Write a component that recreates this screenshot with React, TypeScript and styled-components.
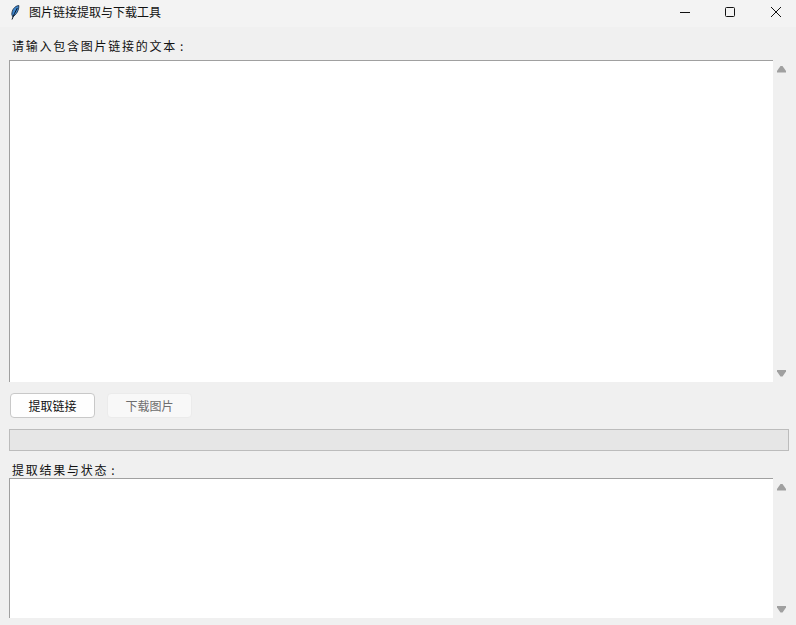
import React from "react";
import styled, { createGlobalStyle } from "styled-components";

const Global = createGlobalStyle`
  html, body { margin: 0; padding: 0; background: #f0f0f0; overflow: hidden; }
  #root { width: 796px; height: 625px; }
  * { box-sizing: border-box; }
`;
const cjk = `"Noto Sans CJK SC", "Liberation Sans", sans-serif`;

const Window = styled.div`
  width: 796px; height: 625px; display: flex; flex-direction: column;
  background: #f0f0f0; font-family: ${cjk}; color: #111; overflow: hidden;
`;
const TitleBar = styled.div`
  height: 27px; flex: none; display: flex; align-items: center; background: #f3f3f3; padding-left: 8px;
`;
const Title = styled.span`
  font-size: 12px; margin-left: 7px; color: #111; line-height: 24px; margin-top: -4px;
`;
const WinButtons = styled.div`
  margin-left: auto; display: flex; align-items: center; margin-top: -3px;
`;
const WinButton = styled.div<{ $w: number; $inset?: number }>`
  width: ${(p) => p.$w}px; height: 24px; display: flex; align-items: center; justify-content: center;
  padding-left: ${(p) => p.$inset ?? 0}px;
`;
const Body = styled.div`
  flex: 1; display: flex; flex-direction: column; padding: 0 7px 7px 9px; min-height: 0;
`;
const Label = styled.div`
  font-size: 12px; line-height: 16px; letter-spacing: 1.75px; padding-left: 3px; height: 33px; padding-top: 11px;
  white-space: pre;
  &[data-second] { height: 27px; padding-top: 11px; }
`;
const Colon = styled.span`
  margin-left: 3px;
`;
const TextRow = styled.div<{ $h: number }>`
  height: ${(p) => p.$h}px; flex: none; display: flex;
`;
const TextBox = styled.div`
  width: 764px; background: #fff; border-top: 1px solid #a0a0a0; border-left: 1px solid #a0a0a0;
`;
const ScrollBar = styled.div`
  width: 16px; display: flex; flex-direction: column; justify-content: space-between; align-items: center;
  padding: 6px 0 5px; background: #f0f0f0;
`;
const Buttons = styled.div`
  display: flex; gap: 12px; padding: 11px 0 0 1px; height: 47px; flex: none;
`;
const Btn = styled.div<{ $off?: boolean }>`
  width: 85px; height: 25px; display: flex; align-items: center; justify-content: center; font-size: 12px;
  border-radius: 4px; background: ${(p) => (p.$off ? "#f8f8f8" : "#fefefe")};
  border: 1px solid ${(p) => (p.$off ? "#ebebeb" : "#c8c8c8")};
  color: ${(p) => (p.$off ? "#6e6e6e" : "#111")};
`;
const Progress = styled.div`
  width: 780px; height: 22px; flex: none; background: #e6e6e6; border: 1px solid #bcbcbc;
`;

const Arrow = ({ down }: { down?: boolean }) => (
  <svg width="9" height="7" viewBox="0 0 9 7">
    <path d={down ? "M0 0h9v1.500L5.500 6.500h-2L0 1.500z" : "M0 6.500h9V5L5.500 0h-2L0 5z"} fill="#a0a0a0" />
  </svg>
);

const Feather = () => (
  <svg width="14" height="17" viewBox="0 0 14 17">
    <path d="M10.800 .5C6.500 1 3.800 5 3.800 9.500l.9 2.200C8.300 10 11.200 5 10.800 .5z" fill="#3f86cc" stroke="#10233a" strokeWidth="0.8" />
    <path d="M9.300 3C7.300 6.500 5.500 10.500 4 14.500" stroke="#0b1a2c" strokeWidth="1" fill="none" />
  </svg>
);

export default function App() {
  return (
    <Window>
      <Global />
      <TitleBar>
        <Feather />
        <Title>图片链接提取与下载工具</Title>
        <WinButtons>
          <WinButton $w={44}>
            <svg width="12" height="12" viewBox="0 0 12 12"><path d="M1 6.500h10" stroke="#111" fill="none" /></svg>
          </WinButton>
          <WinButton $w={46}>
            <svg width="12" height="12" viewBox="0 0 12 12"><rect x="1.500" y="1.500" width="9" height="9" rx="1" stroke="#111" fill="none" /></svg>
          </WinButton>
          <WinButton $w={43} $inset={3}>
            <svg width="12" height="12" viewBox="0 0 12 12"><path d="M1 1l10 10M11 1L1 11" stroke="#111" fill="none" /></svg>
          </WinButton>
        </WinButtons>
      </TitleBar>
      <Body>
        <Label>请输入包含图片链接的文本<Colon>:</Colon></Label>
        <TextRow $h={322}>
          <TextBox />
          <ScrollBar><Arrow /><Arrow down /></ScrollBar>
        </TextRow>
        <Buttons>
          <Btn>提取链接</Btn>
          <Btn $off>下载图片</Btn>
        </Buttons>
        <Progress />
        <Label data-second>提取结果与状态<Colon>:</Colon></Label>
        <TextRow $h={140}>
          <TextBox />
          <ScrollBar><Arrow /><Arrow down /></ScrollBar>
        </TextRow>
      </Body>
    </Window>
  );
}
